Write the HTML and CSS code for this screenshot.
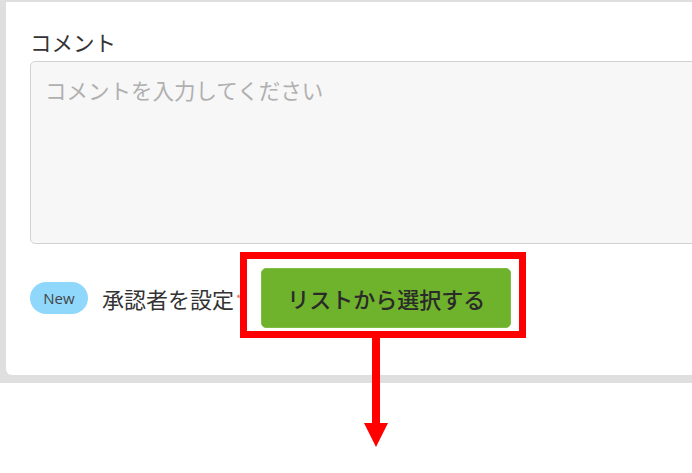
FILE: index.html
```html
<!DOCTYPE html>
<html>
<head>
  <meta charset="UTF-8">
  <title>コメント</title>
  <link rel="stylesheet" href="styles.css">
</head>
<body>
  <div class="panel">
    <div class="card">
      <label class="field-label" for="comment">コメント</label>
      <textarea id="comment" class="comment-box" placeholder="コメントを入力してください"></textarea>
      <div class="approver-row">
        <span class="badge">New</span>
        <span class="approver-label">承認者を設定</span>
        <span class="required">*</span>
        <button class="btn-select">リストから選択する</button>
      </div>
    </div>
  </div>

  <!-- annotation -->
  <div class="mark-box"></div>
  <svg class="mark-arrow" width="24" height="112" viewBox="0 0 24 112">
    <rect x="8" y="0" width="8" height="90" fill="#ff0000"/>
    <polygon points="0,86 24,86 12,110" fill="#ff0000"/>
  </svg>
</body>
</html>
```

FILE: styles.css
```css
* {
  box-sizing: border-box;
}

body {
  margin: 0;
  background-color: #fff;
  font-family: "Noto Sans CJK JP", "Noto Sans", sans-serif;
  color: #333;
  overflow: hidden;
  width: 692px;
  height: 473px;
  position: relative;
}

.panel {
  background-color: #dfdfdf;
  padding: 2px 0 8px 6px;
}

.card {
  background-color: #fff;
  border-bottom-left-radius: 6px;
  padding: 26px 0 47px 24px;
  overflow: hidden;
}

.field-label {
  display: block;
  font-size: 21.5px;
  line-height: 28px;
  margin-bottom: 5px;
}

.comment-box {
  display: block;
  width: 700px;
  height: 183px;
  padding: 14px;
  border: 1px solid #d2d2d2;
  border-radius: 5px;
  background-color: #f7f7f7;
  font-family: inherit;
  font-size: 21.5px;
  line-height: 28px;
  resize: none;
  outline: none;
}

.comment-box::placeholder {
  color: #b0b0b0;
}

.approver-row {
  display: flex;
  align-items: center;
  margin-top: 24px;
}

.badge {
  display: inline-block;
  width: 58px;
  height: 32px;
  line-height: 32px;
  text-align: center;
  border-radius: 16px;
  background-color: #8fd8fc;
  color: #444;
  font-family: "Open Sans", "Liberation Sans", sans-serif;
  font-size: 15px;
  margin-right: 14px;
}

.approver-label {
  font-size: 22px;
}

.required {
  color: #f06040;
  font-size: 11px;
  align-self: flex-start;
  margin-top: 22px;
  margin-left: 2px;
}

.btn-select {
  margin-left: 20px;
  width: 250px;
  height: 60px;
  border: 1px solid #80bd45;
  border-radius: 5px;
  background-color: #6fb22c;
  color: #2a2a2a;
  font-family: inherit;
  font-size: 22px;
  font-weight: 500;
  cursor: pointer;
}

.mark-box {
  position: absolute;
  left: 240px;
  top: 252px;
  width: 286px;
  height: 86px;
  border: 7px solid #ff0000;
}

.mark-arrow {
  position: absolute;
  left: 364px;
  top: 337px;
}
```
